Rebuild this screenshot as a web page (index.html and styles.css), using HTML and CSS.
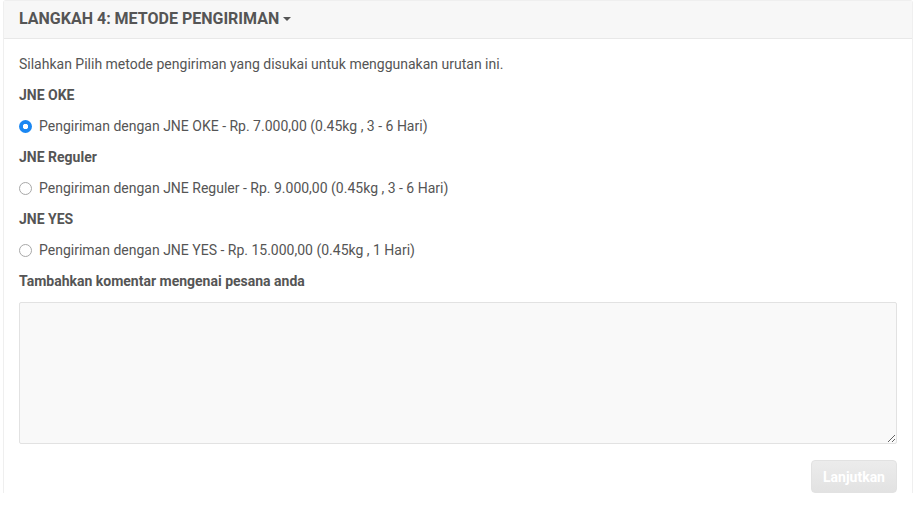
FILE: index.html
```html
<!DOCTYPE html>
<html lang="id">

<head>
    <meta charset="UTF-8">
    <title>Langkah 4: Metode Pengiriman</title>
    <link rel="stylesheet" href="styles.css">
</head>

<body>
    <div class="panel">
        <div class="panel-heading">
            <h4>Langkah 4: Metode Pengiriman <span class="caret"></span></h4>
        </div>

        <div class="panel-body">
            <p>Silahkan Pilih metode pengiriman yang disukai untuk menggunakan urutan ini.</p>

            <p class="group-title">JNE OKE</p>
            <label class="radio">
                <input type="radio" name="shipping" value="oke" checked>
                Pengiriman dengan JNE OKE - Rp. 7.000,00 (0.45kg , 3 - 6 Hari)
            </label>

            <p class="group-title">JNE Reguler</p>
            <label class="radio">
                <input type="radio" name="shipping" value="reg">
                Pengiriman dengan JNE Reguler - Rp. 9.000,00 (0.45kg , 3 - 6 Hari)
            </label>

            <p class="group-title">JNE YES</p>
            <label class="radio">
                <input type="radio" name="shipping" value="yes">
                Pengiriman dengan JNE YES - Rp. 15.000,00 (0.45kg , 1 Hari)
            </label>

            <p class="group-title">Tambahkan komentar mengenai pesana anda</p>
            <textarea name="comment"></textarea>

            <div class="buttons">
                <button type="button" disabled>Lanjutkan</button>
            </div>
        </div>
    </div>
</body>

</html>
```

FILE: styles.css
```css
body {
    margin: 0;
    padding: 0 5px 0 3px;
    font-family: Roboto, "Liberation Sans", Arial, sans-serif;
    font-size: 14px;
    color: #555;
    background: #fff;
}

.panel {
    border: 1px solid #efefef;
    border-bottom: none;
    border-radius: 3px 3px 0 0;
}

.panel-heading {
    background: #f7f7f7;
    border-bottom: 1px solid #e8e8e8;
    padding: 9px 15px 10px;
}

.panel-heading h4 {
    margin: 0;
    font-size: 16px;
    line-height: 18px;
    font-weight: bold;
    text-transform: uppercase;
    color: #555;
}

.caret {
    display: inline-block;
    vertical-align: middle;
    margin-top: -2px;
    border-top: 4px solid #555;
    border-left: 4px solid transparent;
    border-right: 4px solid transparent;
}

.panel-body {
    display: flex;
    flex-direction: column;
    gap: 11px;
    padding: 15px 15px 0;
}

.panel-body p {
    margin: 0;
    line-height: 20px;
}

.group-title {
    font-weight: bold;
}

.radio {
    display: flex;
    align-items: center;
    gap: 7px;
    line-height: 20px;
    cursor: pointer;
}

.radio input {
    appearance: none;
    margin: 0;
    width: 13px;
    height: 13px;
    border: 1px solid #a8a8a8;
    border-radius: 50%;
    background: #fff;
}

.radio input:checked {
    border: none;
    background: radial-gradient(circle, #fff 0 2.4px, #1a87f2 3px);
}

textarea {
    height: 142px;
    box-sizing: border-box;
    border: 1px solid #e2e2e2;
    border-radius: 2px;
    background: #f9f9f9;
    resize: vertical;
    font-family: inherit;
}

.buttons {
    display: flex;
    justify-content: flex-end;
    margin-top: 5px;
}

button {
    width: 86px;
    height: 33px;
    border: 1px solid #e2e2e2;
    border-radius: 4px;
    background: linear-gradient(#ececec, #e2e2e2);
    color: #fff;
    font-family: inherit;
    font-size: 14px;
    font-weight: bold;
}
```
